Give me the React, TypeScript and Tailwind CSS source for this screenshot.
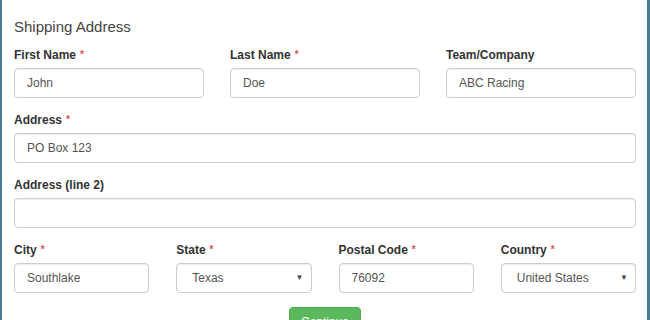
import React from 'react';

const Req = () => <span className="text-[#d9534f] text-[10px] align-top ml-1">*</span>;

function Field({ label, required, value, select }: { label: string; required?: boolean; value: string; select?: boolean }) {
  return (
    <div className="flex flex-col min-w-0">
      <label className="h-4 mb-[5px] text-[12px] leading-4 font-bold text-[#333]">
        {label}
        {required && <Req />}
      </label>
      {select ? (
        <div className="relative">
          <select
            defaultValue={value}
            className="appearance-none w-full h-[30px] pl-[15px] pr-6 text-[12px] text-[#555] bg-white border border-[#ccc] rounded-[4px] shadow-[inset_0_1px_1px_rgba(0,0,0,0.075)] outline-none"
          >
            <option>{value}</option>
          </select>
          <span className="pointer-events-none absolute right-[8px] top-[9px] text-[8px] text-[#444]">▼</span>
        </div>
      ) : (
        <input
          defaultValue={value}
          className="w-full h-[30px] px-3 text-[12px] text-[#555] bg-white border border-[#ccc] rounded-[4px] shadow-[inset_0_1px_1px_rgba(0,0,0,0.075)] outline-none"
        />
      )}
    </div>
  );
}

export default function App() {
  return (
    <div
      className="w-[650px] h-[320px] overflow-hidden bg-white border-l-2 border-r-[3px] border-[#4a7a94]"
      style={{ fontFamily: '"Liberation Sans", Arial, sans-serif' }}
    >
      <div className="pl-3 pr-[8px] pt-[17px] border-r-[3px] border-[#f2fbff]">
        <h2 className="h-5 mb-[10px] text-[15px] leading-5 text-[#444]">Shipping Address</h2>

        <div className="grid grid-cols-3 gap-x-[26px]">
          <Field label="First Name" required value="John" />
          <Field label="Last Name" required value="Doe" />
          <Field label="Team/Company" value="ABC Racing" />
        </div>

        <div className="mt-[14px]">
          <Field label="Address" required value="PO Box 123" />
        </div>

        <div className="mt-[14px]">
          <Field label="Address (line 2)" value="" />
        </div>

        <div className="mt-[14px] grid grid-cols-4 gap-x-[27px]">
          <Field label="City" required value="Southlake" />
          <Field label="State" required value="Texas" select />
          <Field label="Postal Code" required value="76092" />
          <Field label="Country" required value="United States" select />
        </div>

        <div className="mt-[14px] flex justify-center">
          <button className="w-[72px] h-[30px] rounded-[4px] bg-[#5cb85c] border border-[#4cae4c] text-white text-[12px]">
            Continue
          </button>
        </div>
      </div>
    </div>
  );
}
